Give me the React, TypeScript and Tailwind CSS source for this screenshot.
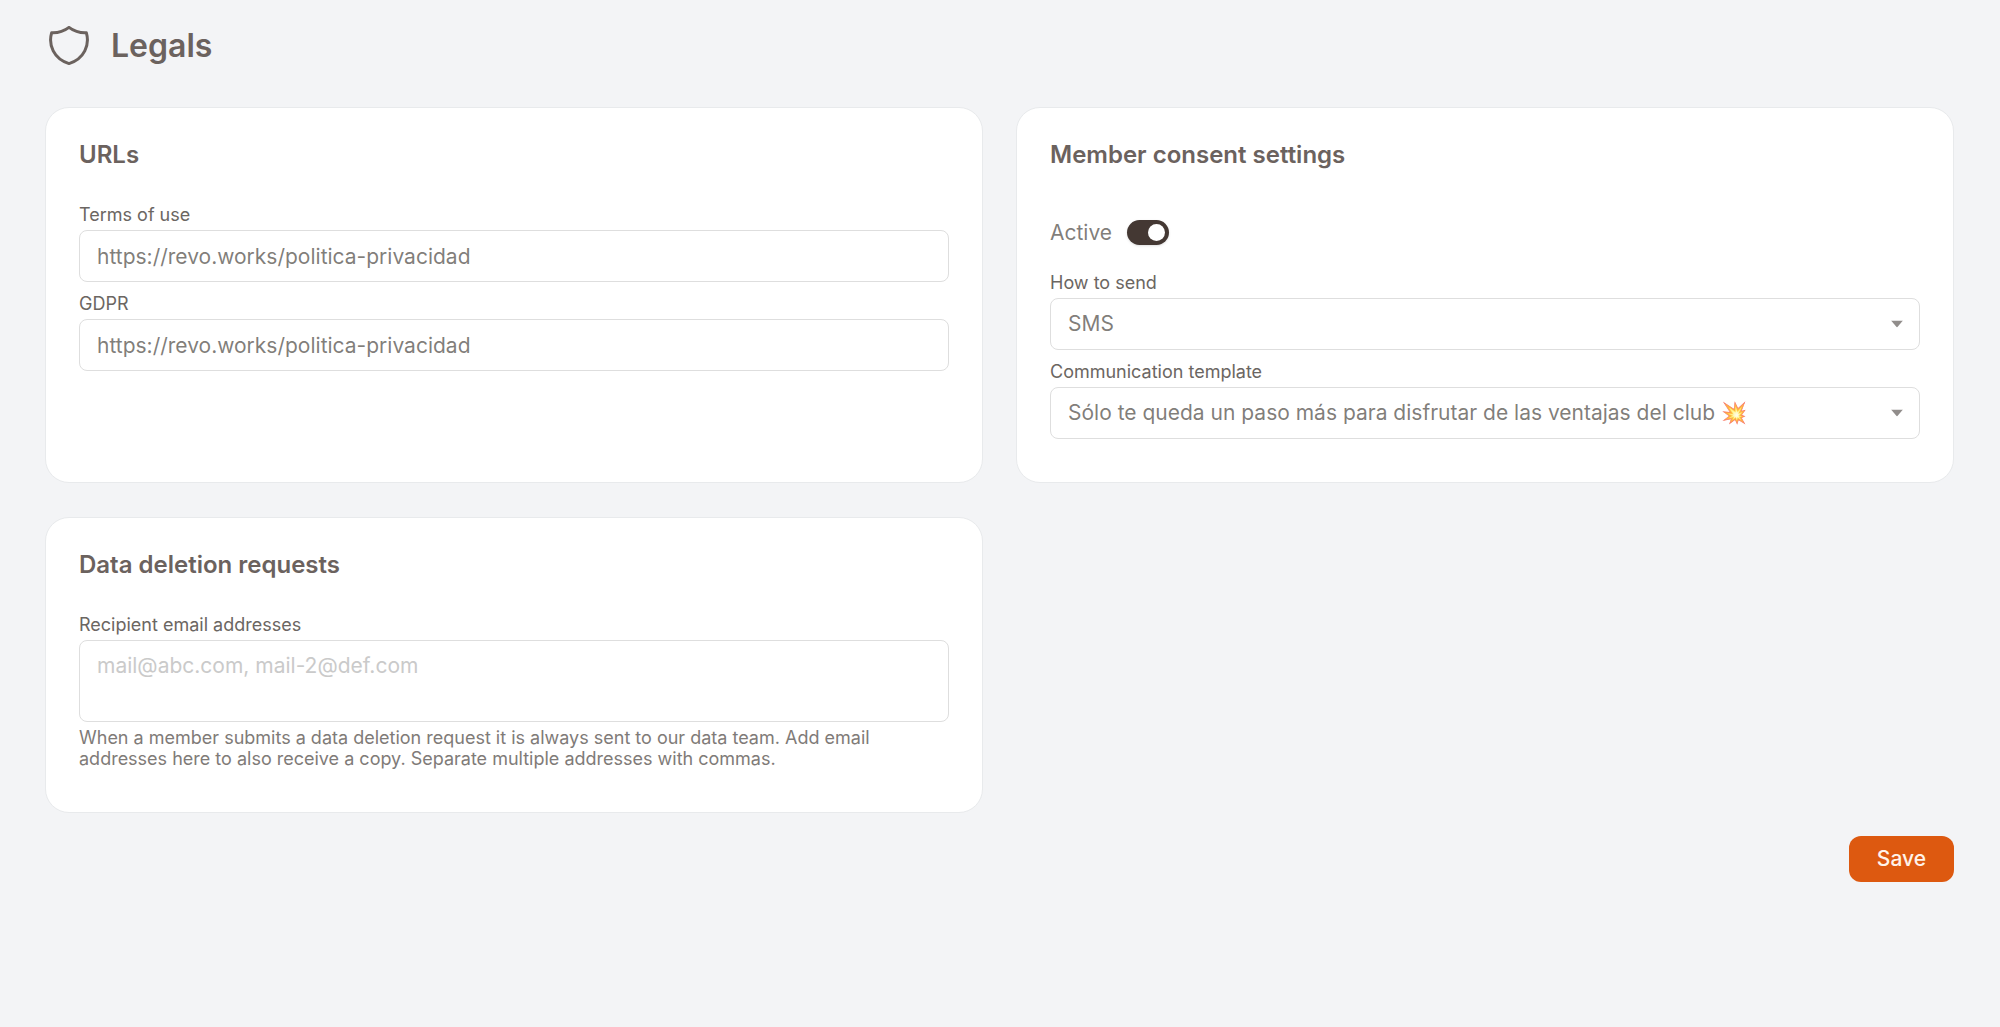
import { useState } from "react";
import type { ReactNode } from "react";

const TERMS_URL = "https://revo.works/politica-privacidad";
const GDPR_URL = "https://revo.works/politica-privacidad";

const fieldClass =
  "block w-full rounded-lg border border-[#dedede] bg-white px-[17px] text-[21px] text-[#57534e]/75 outline-none focus:border-stone-400";

const ShieldIcon = () => (
  <svg className="h-10 w-10 text-[#6b625e]" viewBox="0 0 40 40" fill="none" stroke="currentColor" strokeWidth="3" strokeLinejoin="round" strokeLinecap="round" aria-hidden="true">
    <path d="M20 1.4C15 5.2 9 7.1 2.6 6.8C-0.8 18.8 4.5 32.8 20 37.6C35.5 32.8 40.8 18.8 37.4 6.8C31 7.1 25 5.2 20 1.4Z" />
  </svg>
);

const Card = ({ title, children }: { title: string; children: ReactNode }) => (
  <section className="rounded-3xl border border-[#e8eaec] bg-white px-[33px] pt-[33px] pb-8">
    <h2 className="mb-[35px] text-2xl leading-7 font-semibold text-[#6b625e]">{title}</h2>
    {children}
  </section>
);

const Field = ({ id, label, children }: { id: string; label: string; children: ReactNode }) => (
  <div className="mb-[11px]">
    <label htmlFor={id} className="mb-[5px] block text-lg leading-[21px] text-[#6b6662]">
      {label}
    </label>
    {children}
  </div>
);

const Select = ({ id, options }: { id: string; options: string[] }) => (
  <div className="relative">
    <select id={id} className={`${fieldClass} h-[52px] appearance-none pr-12`}>
      {options.map((option) => (
        <option key={option}>{option}</option>
      ))}
    </select>
    <svg className="pointer-events-none absolute top-1/2 right-[17px] h-[7px] w-3 -translate-y-1/2 text-[#918d8b]" viewBox="0 0 12 7" fill="currentColor" aria-hidden="true">
      <path d="M0 0h12L6 7z" />
    </svg>
  </div>
);

const App = () => {
  const [terms, setTerms] = useState(TERMS_URL);
  const [gdpr, setGdpr] = useState(GDPR_URL);
  const [active, setActive] = useState(true);

  return (
    <main className="min-h-screen bg-[#f3f4f6] pt-[25px] pr-[46px] pb-16 pl-[45px] font-['Inter',sans-serif]">
      <header className="mb-10 flex items-center gap-[22px] pl-1">
        <ShieldIcon />
        <h1 className="text-[32px] leading-[42px] font-semibold text-[#6b625e]">Legals</h1>
      </header>

      <form onSubmit={(e) => e.preventDefault()}>
        <div className="grid grid-cols-1 gap-x-[33px] gap-y-[34px] lg:grid-cols-2">
          <Card title="URLs">
            <Field id="terms" label="Terms of use">
              <input id="terms" type="text" value={terms} onChange={(e) => setTerms(e.target.value)} className={`${fieldClass} h-[52px]`} />
            </Field>
            <Field id="gdpr" label="GDPR">
              <input id="gdpr" type="text" value={gdpr} onChange={(e) => setGdpr(e.target.value)} className={`${fieldClass} h-[52px]`} />
            </Field>
          </Card>

          <Card title="Member consent settings">
            <div className="mb-[11px] flex items-center gap-[15px] py-4">
              <label htmlFor="active" className="text-[21px] leading-[25px] text-[#57534e]/75">
                Active
              </label>
              <input
                id="active"
                type="checkbox"
                role="switch"
                checked={active}
                onChange={(e) => setActive(e.target.checked)}
                className="flex h-[25px] w-[42px] appearance-none items-center rounded-full bg-stone-300 px-1 shadow before:h-[17px] before:w-[17px] before:rounded-full before:bg-white checked:justify-end checked:bg-[#443833]"
              />
            </div>
            <Field id="channel" label="How to send">
              <Select id="channel" options={["SMS", "Email"]} />
            </Field>
            <Field id="template" label="Communication template">
              <Select id="template" options={["Sólo te queda un paso más para disfrutar de las ventajas del club 💥"]} />
            </Field>
          </Card>

          <Card title="Data deletion requests">
            <Field id="recipients" label="Recipient email addresses">
              <textarea id="recipients" placeholder="mail@abc.com, mail-2@def.com" aria-describedby="recipients-help" className={`${fieldClass} h-[82px] resize-none py-[9px] placeholder:text-[#cacaca]`} />
              <p id="recipients-help" className="mt-[5px] text-lg leading-[21px] text-[#7f7b78]">
                When a member submits a data deletion request it is always sent to our data team. Add email addresses here to also receive a copy. Separate multiple addresses with commas.
              </p>
            </Field>
          </Card>
        </div>

        <div className="mt-[23px] flex justify-end">
          <button type="submit" className="h-[46px] rounded-xl bg-[#dd5910] px-7 text-[21px] font-medium text-[#fff3ea] hover:bg-[#c64f0d]">
            Save
          </button>
        </div>
      </form>
    </main>
  );
};

export default App;
